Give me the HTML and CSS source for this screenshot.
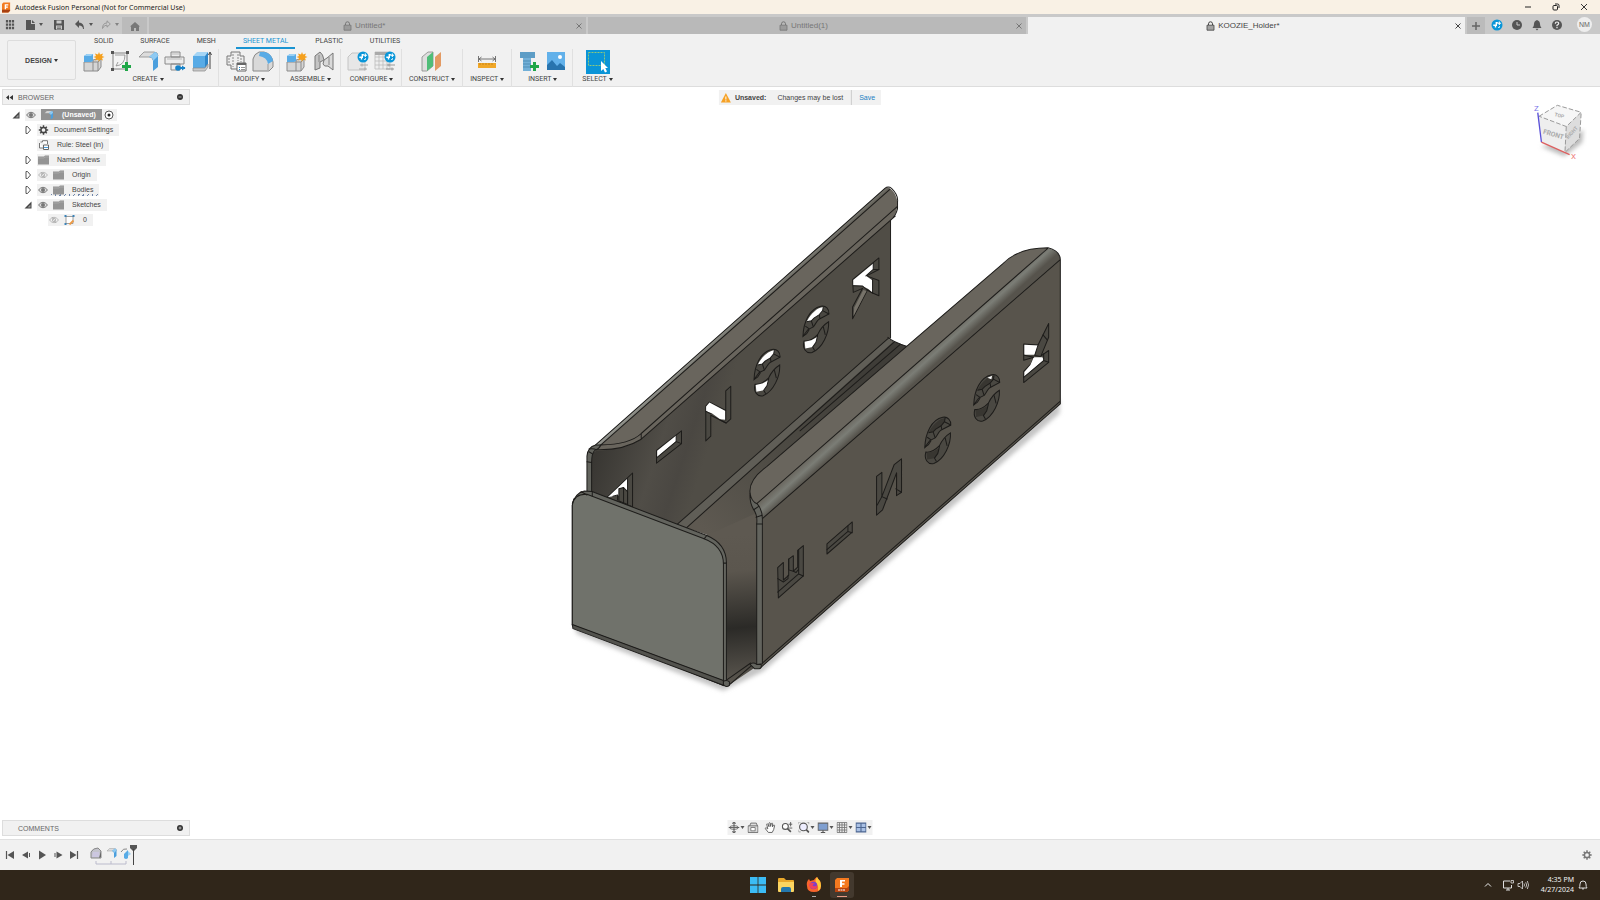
FILE: index.html
```html
<!DOCTYPE html>
<html lang="en">
<head>
    <meta charset="UTF-8">
    <meta name="viewport" content="width=device-width, initial-scale=1.0">
    <title>Autodesk Fusion Personal (Not for Commercial Use)</title>
    <link rel="stylesheet" href="styles.css">
</head>
<body>
    <!-- shared icons -->
    <svg class="defs" aria-hidden="true">
        <symbol id="lock" viewBox="0 0 9 10"><path d="M2.500 4V2.800a2 2 0 0 1 4 0V4" fill="none" stroke="currentColor"/><path d="M1 4.200h7v5H1z" fill="currentColor" fill-opacity=".45" stroke="currentColor" stroke-width=".8"/></symbol>
        <symbol id="cross" viewBox="0 0 8 8"><path d="M1.500 1.500l5 5M6.500 1.500l-5 5" stroke="currentColor" fill="none"/></symbol>
        <symbol id="eye" viewBox="0 0 10 8"><path d="M.5 4Q5-1.500 9.500 4Q5 9.500 .5 4z" fill="#ddd" stroke="currentColor"/><circle cx="5" cy="4" r="2" fill="currentColor"/></symbol>
        <symbol id="eye-off" viewBox="0 0 10 8"><path d="M.5 4Q5-1.500 9.500 4Q5 9.500 .5 4z" fill="none" stroke="#aaa" stroke-width=".8"/><circle cx="5" cy="4" r="1.700" fill="none" stroke="#aaa" stroke-width=".8"/><path d="M3 1l4 6" stroke="#aaa" stroke-width=".8"/></symbol>
        <symbol id="folder" viewBox="0 0 11 9"><path d="M0 1h6l1-1h4v9H0z" fill="#949494"/><path d="M0 2.500h6l1-1h4" stroke="#bbb" stroke-width=".5" fill="none"/></symbol>
        <symbol id="open" viewBox="0 0 8 8"><path d="M7.500 .5v7H.5z" fill="#444"/><path d="M6.500 3.500v3H3.500z" fill="#999"/></symbol>
        <symbol id="closed" viewBox="0 0 8 8"><path d="M2 .5h1.500L6.500 4 3.500 7.500H2z" fill="#fff" stroke="#555"/></symbol>
        <symbol id="gear" viewBox="0 0 10 10"><circle cx="5" cy="5" r="2.600" fill="none" stroke="currentColor" stroke-width="1.500"/><path d="M5 .3v2M5 7.700v2M.3 5h2M7.700 5h2M1.700 1.700l1.300 1.300M7 7l1.300 1.300M1.700 8.300L3 7M7 3l1.300-1.300" stroke="currentColor" stroke-width="1.500"/></symbol>
        <symbol id="sync" viewBox="0 0 12 12"><circle cx="6" cy="6" r="5.500" fill="#0a96d8"/><path d="M2.300 6.300h3V3.800h1.500M4.500 8.500V6.300" stroke="#fff" fill="none" stroke-width="1.400"/><path d="M8.300 2.500v3.600M6.500 4.300h3.600" stroke="#fff" stroke-width="1.100"/><path d="M7 8.500h1.500V7" stroke="#bfe4f7" fill="none"/></symbol>
        <symbol id="component" viewBox="0 0 22 22"><path d="M1 12h9v-2l8-2v9l-3 4H1z" fill="#d5d5d5" stroke="#8b8b8b"/><path d="M10 12v9M10 12h5l3-3M15 12v9" stroke="#8b8b8b" fill="none"/><path d="M1 6l3-2h6v7l-2 1H1z" fill="#58abe6"/><path d="M1 6l3-2h6L8 6z" fill="#9ad0f4"/><path d="M16 2l1 2.500L20 3.500 19 6l2.500 1L19 8l1 2.500-3-1L16 12l-1-2.500-3 1L13 8l-2.500-1L13 6l-1-2.500 3 1z" fill="#f5a01d"/></symbol>
        <symbol id="bend" viewBox="0 0 22 22"><path d="M2 7l5-5h10q4 0 4 4l-5 4q0-3-4-3z" fill="#dcdcdc" stroke="#8b8b8b" stroke-width=".8"/><path d="M12 7q4 0 4 4v10l5-4V6q0-3-3-4z" fill="#4b9fdd"/><path d="M12 7q4 0 4 4l5-5q0-3-3-4z" fill="#8fcaf2"/></symbol>
    </svg>

    <header class="titlebar">
        <svg class="app-icon" viewBox="0 0 10 11"><path d="M1.500 0H9v9l-2 2H0V1.500z" fill="#f37b20"/><path d="M0 8h9v1l-2 2H0z" fill="#a84010"/><path d="M3 2h4v1.400H4.500v1h2v1.300h-2V7.500H3z" fill="#fff"/></svg>
        <span class="app-title">Autodesk Fusion Personal (Not for Commercial Use)</span>
        <div class="window-buttons">
            <button aria-label="Minimize"><svg viewBox="0 0 8 8"><path d="M1 4h6" stroke="#222"/></svg></button>
            <button aria-label="Restore"><svg viewBox="0 0 8 8"><rect x="1" y="2.500" width="4.500" height="4.500" rx="1" fill="none" stroke="#222"/><path d="M3 1h2.500Q7 1 7 2.500V5" fill="none" stroke="#222"/></svg></button>
            <button aria-label="Close"><svg viewBox="0 0 8 8"><path d="M1 1l6 6M7 1L1 7" stroke="#222" stroke-width=".9"/></svg></button>
        </div>
    </header>

    <div class="tabbar">
        <div class="quick">
            <button aria-label="Data panel"><svg viewBox="0 0 10 10" width="10" height="10"><path d="M2 0v10M5 0v10M8 0v10" stroke="#555" stroke-width="2.200" stroke-dasharray="2.400 1"/></svg></button>
            <button class="drop" aria-label="File"><svg viewBox="0 0 9 10" width="9" height="10"><path d="M0 0h5v4h4v6H0z" fill="#555"/><path d="M6 0l3 3H6z" fill="#555"/></svg></button>
            <button aria-label="Save"><svg viewBox="0 0 10 10" width="10" height="10"><path d="M0 0h10v10H1L0 9z" fill="#555"/><path d="M2.500 .5h5v3h-5zM2 5.500h6v4H2z" fill="#c9c9c9"/><path d="M3 7h4M3 8.500h4" stroke="#555" stroke-width=".7"/></svg></button>
            <button class="drop" aria-label="Undo"><svg viewBox="0 0 10 9" width="10" height="9"><path d="M4 0v2.500q5 0 5 6.500h-1Q8 5.500 4 5.500V8L0 4z" fill="#555"/></svg></button>
            <button class="drop faded" aria-label="Redo"><svg viewBox="0 0 10 9" width="10" height="9"><path d="M6 .8V3Q1.500 3 1.500 8.500 3 5 6 5v2.200L9.300 4z" fill="none" stroke="#777"/></svg></button>
        </div>
        <button class="home" aria-label="Home"><svg viewBox="0 0 10 9" width="10" height="9"><path d="M5 0l5 4.500H9V9H6V6H4v3H1V4.500H0z" fill="#777"/></svg></button>
        <div class="doc-tab"><button class="doc-name"><svg><use href="#lock"/></svg>Untitled*</button><button class="doc-close" aria-label="Close Untitled"><svg><use href="#cross"/></svg></button></div>
        <div class="doc-tab"><button class="doc-name"><svg><use href="#lock"/></svg>Untitled(1)</button><button class="doc-close" aria-label="Close Untitled(1)"><svg><use href="#cross"/></svg></button></div>
        <div class="doc-tab active"><button class="doc-name"><svg><use href="#lock"/></svg>KOOZIE_Holder*</button><button class="doc-close" aria-label="Close KOOZIE_Holder"><svg><use href="#cross"/></svg></button></div>
        <button class="new-tab" aria-label="New tab"><svg viewBox="0 0 8 8" width="8" height="8"><path d="M4 0v8M0 4h8" stroke="#666" stroke-width="1.500"/></svg></button>
        <div class="account">
            <button aria-label="Extensions"><svg><use href="#sync"/></svg></button>
            <button aria-label="Job status"><svg viewBox="0 0 12 12"><circle cx="6" cy="6" r="5" fill="#555"/><path d="M6 3v3h3" stroke="#ccc" fill="none"/></svg></button>
            <button aria-label="Notifications"><svg viewBox="0 0 12 12"><path d="M1.500 9Q3 7.500 3 5q0-3 3-4 3 1 3 4 0 2.500 1.500 4zM4.500 9.800h3L6 11.500z" fill="#555"/></svg></button>
            <button aria-label="Help"><svg viewBox="0 0 12 12"><circle cx="6" cy="6" r="5" fill="#555"/><path d="M4.300 4.700Q4.300 3 6 3t1.700 1.600Q7.700 5.500 6 6.300v.9M6 8v1.200" stroke="#eee" fill="none" stroke-width="1.200"/></svg></button>
            <button class="avatar">NM</button>
        </div>
    </div>

    <div class="ribbon">
        <button class="workspace">DESIGN <i class="caret"></i></button>
        <nav class="ribbon-tabs">
            <button>SOLID</button>
            <button>SURFACE</button>
            <button>MESH</button>
            <button class="active">SHEET METAL</button>
            <button>PLASTIC</button>
            <button>UTILITIES</button>
        </nav>
        <div class="groups">
            <section class="group">
                <div class="tools">
                    <button aria-label="New component"><svg><use href="#component"/></svg></button>
                    <button aria-label="Create sketch"><svg viewBox="0 0 22 22"><path d="M3 3h14v16H3z" fill="#f4f4f4" stroke="#777" stroke-width=".9"/><path d="M6 16q9-1 9-11M6 16l2-4M5 5l10 0" fill="none" stroke="#888" stroke-width=".8"/><path d="M1 1h3v3H1zM16 1h3v3h-3zM1 18h3v3H1z" fill="#555"/><path d="M16.500 12v9M12 16.500h9" stroke="#1fa647" stroke-width="3"/></svg></button>
                    <button aria-label="Flange"><svg><use href="#bend"/></svg></button>
                    <button aria-label="Unfold"><svg viewBox="0 0 22 22"><path d="M7 2h9v5H7zM1 7h19v7H1zM7 14h9v6H7z" fill="#ececec" stroke="#888"/><path d="M8 4h7M3 9h15" stroke="#bbb"/><path d="M12 18h9" stroke="#1783c9" stroke-width="2"/><circle cx="14" cy="18" r="2.800" fill="#1783c9"/><path d="M18 15.500l3.500 2.500-3.500 2.500z" fill="#1783c9"/></svg></button>
                    <button aria-label="Extrude"><svg viewBox="0 0 22 22"><path d="M2 6l4-4h11l-3 4z" fill="#a5d5f5"/><path d="M2 6h12v12H2z" fill="#58abe6"/><path d="M14 6l3-4v12l-3 4z" fill="#2e86c9"/><path d="M2 18h12l3-4v3l-3 4H2z" fill="#c9c9c9" stroke="#888" stroke-width=".7"/><path d="M19 3v16M17.500 5L19 2l1.500 3" stroke="#444" fill="none"/></svg></button>
                </div>
                <button class="group-label">CREATE <i class="caret"></i></button>
            </section>
            <section class="group">
                <div class="tools">
                    <button aria-label="Sheet metal rules"><svg viewBox="0 0 22 22"><path d="M6 2h9v4h4v8h-4v5H6v-4H2V6h4z" fill="#eee" stroke="#777"/><path d="M4 8v5M8 4v13M13 4v7M16 8v4" stroke="#888" stroke-dasharray="2 1"/><path d="M12 13h9v8h-9z" fill="#fff" stroke="#666"/><path d="M12 14h9" stroke="#666" stroke-width="2"/><path d="M14 17.500h1M14 19.500h1" stroke="#1783c9"/><path d="M16 17.500h4M16 19.500h4" stroke="#777" stroke-width=".8"/></svg></button>
                    <button aria-label="Fillet"><svg viewBox="0 0 22 22"><path d="M1 20V9q1-5 6-7h5q8 2 9 10v5l-4 4H1z" fill="#d9d9d9" stroke="#888"/><path d="M8 2h5q7 2 8 9l-5 3Q15 7 7 6z" fill="#58abe6"/><path d="M16 14v6" stroke="#999"/></svg></button>
                </div>
                <button class="group-label">MODIFY <i class="caret"></i></button>
            </section>
            <section class="group">
                <div class="tools">
                    <button aria-label="New component"><svg><use href="#component"/></svg></button>
                    <button aria-label="Joint"><svg viewBox="0 0 22 22"><path d="M2 6l5-4q3 2 4 8l-4 2v6l-5 2z" fill="#c4c4c4" stroke="#777"/><path d="M20 3v17l-5-4q-4 1-5-2 0-5 4-6z" fill="#d9d9d9" stroke="#777"/><path d="M16 7v8M6 5v7" stroke="#888"/></svg></button>
                </div>
                <button class="group-label">ASSEMBLE <i class="caret"></i></button>
            </section>
            <section class="group">
                <div class="tools">
                    <button aria-label="Configure"><svg viewBox="0 0 22 22"><path d="M1 20V7l4-4h9l4 4v13z" fill="#e7e7e7" stroke="#c4c4c4"/><path d="M13 15h8M12 19h8M15 13.500v3M18 17.500v3" stroke="#aaa"/><use href="#sync" x="10" y="1" width="12" height="12"/></svg></button>
                    <button aria-label="Configuration table"><svg viewBox="0 0 22 22"><path d="M1 2h15v17H1zM1 7h15M1 11h15M1 15h15M5 5v14M9 5v14M13 5v14" fill="#eee" stroke="#bbb" stroke-width=".8"/><path d="M1 2h12v3H1z" fill="#aaa"/><path d="M13 15h8M12 19h8M15 13.500v3M18 17.500v3" stroke="#999"/><use href="#sync" x="10" y="1" width="12" height="12"/></svg></button>
                </div>
                <button class="group-label">CONFIGURE <i class="caret"></i></button>
            </section>
            <section class="group single">
                <div class="tools">
                    <button aria-label="Offset plane"><svg viewBox="0 0 22 22"><path d="M1 7l6-5h5v14l-6 5H1z" fill="#dedede" stroke="#888" stroke-width=".8"/><path d="M6 7l6-5v14l-6 5z" fill="#4fbd78"/><path d="M14 7l6-5v14l-6 5z" fill="#e39a63"/></svg></button>
                </div>
                <button class="group-label">CONSTRUCT <i class="caret"></i></button>
            </section>
            <section class="group single">
                <div class="tools">
                    <button aria-label="Measure"><svg viewBox="0 0 22 22"><path d="M2.500 6v6M19.500 6v6M3 9h16M5.500 7L3 9l2.500 2M16.500 7L19 9l-2.500 2" stroke="#666" fill="none" stroke-width=".9"/><path d="M2 13h18v5H2z" fill="#f0a728"/><path d="M4 13v2M7 13v2M10 13v2M13 13v2M16 13v2" stroke="#c98516"/></svg></button>
                </div>
                <button class="group-label">INSPECT <i class="caret"></i></button>
            </section>
            <section class="group">
                <div class="tools">
                    <button aria-label="Insert fastener"><svg viewBox="0 0 22 22"><path d="M2 2h15v6H2z" fill="#5d9dc6"/><path d="M5 8h8v13H5z" fill="#72b0d8"/><path d="M5 11h8M5 14h8M5 17h8" stroke="#4f8db5"/><path d="M16.500 12v9M12 16.500h9" stroke="#1fa647" stroke-width="3"/></svg></button>
                    <button aria-label="Canvas"><svg viewBox="0 0 22 22"><path d="M2 2h18v18H2z" fill="#62b1ea"/><path d="M2 15l5-5 5 6 3-3 5 4v3H2z" fill="#2874ae"/><circle cx="15" cy="7" r="2" fill="#fff"/></svg></button>
                </div>
                <button class="group-label">INSERT <i class="caret"></i></button>
            </section>
            <section class="group">
                <div class="tools">
                    <button class="picked" aria-label="Select"><svg viewBox="0 0 24 24"><path d="M0 0h24v24H0z" fill="#0a94d7"/><path d="M2.500 2.500h16v13h-16z" fill="none" stroke="#8fc97a" stroke-dasharray="2 1"/><path d="M15 11v10l2.300-2 1.700 3.500 2-1-1.700-3.500H22z" fill="#fff"/></svg></button>
                </div>
                <button class="group-label">SELECT <i class="caret"></i></button>
            </section>
        </div>
    </div>

    <main class="viewport">
        <svg class="scene" viewBox="0 0 1600 753" role="img" aria-label="Sheet metal holder">
            <defs>
                <filter id="soft" x="-10%" y="-10%" width="120%" height="120%"><feGaussianBlur stdDeviation="6"/></filter>
                <linearGradient id="wallIn" gradientUnits="userSpaceOnUse" x1="100" y1="860" x2="400" y2="960"><stop offset="0" stop-color="#393733"/><stop offset=".55" stop-color="#504d47"/><stop offset=".8" stop-color="#4a4742"/><stop offset="1" stop-color="#504d46"/></linearGradient>
                <linearGradient id="floor" gradientUnits="userSpaceOnUse" x1="900" y1="600" x2="450" y2="1080"><stop offset="0" stop-color="#3f3d38"/><stop offset=".6" stop-color="#504d46"/><stop offset="1" stop-color="#5e5951"/></linearGradient>
                <linearGradient id="floorFront" gradientUnits="userSpaceOnUse" x1="520" y1="1080" x2="555" y2="1500"><stop offset="0" stop-color="#5e5951"/><stop offset=".25" stop-color="#5b564e"/><stop offset=".65" stop-color="#2b2a27"/><stop offset="1" stop-color="#57534c"/></linearGradient>
                <linearGradient id="roll" gradientUnits="userSpaceOnUse" x1="1000" y1="620" x2="1032" y2="656"><stop offset="0" stop-color="#67635b"/><stop offset=".5" stop-color="#7b7d76"/><stop offset="1" stop-color="#56534c"/></linearGradient>
                <linearGradient id="rollLeft" gradientUnits="userSpaceOnUse" x1="530" y1="432" x2="548" y2="452"><stop offset="0" stop-color="#9b9d97"/><stop offset="1" stop-color="#5c5951"/></linearGradient>
                <g id="sCut">
                    <path class="cut" d="M-39 20C-38 -20 -20 -62 15 -69C30 -72 40 -60 39 -46L12 -32C4 -30 -2 -14 -8 -8L-24 0Z"/>
                    <path class="cut" d="M38 -23C40 10 20 55 -12 68C-30 72 -42 55 -36 34C-20 36 -5 25 5 15C12 0 20 -12 38 -23Z"/>
                </g>
                <path id="sHoles" d="M-28 -23C-16 -48 5 -66 22 -67L20 -56L10 -44L-6 -34L-14 -26ZM-34 36L-14 32L4 22L0 38L-10 52L-32 56Z"/>
                <path id="sEdges" class="edge" d="M-39 20L-28 12L-20 0M-32 -10L-20 -2M-28 -23L-14 -26L-6 -34L10 -44L20 -56L22 -67M-14 -26L-8 -8M10 -44L12 -32M20 -56L39 -46M4 22L0 38L-10 52L-4 62M22 -8L28 16M4 22L5 15"/>
            </defs>
            <g class="model" transform="translate(560 84) scale(.33333 .338)">
                <path class="shadow" d="M50 1372L490 1540L610 1482L1500 718L1500 675L600 1440L480 1500L40 1345Z" filter="url(#soft)"/>

                <!-- left wall -->
                <path fill="url(#wallIn)" d="M84 850L120 815L240 775L992 140V495L350 1048L84 955Z"/>
                <path class="edge" d="M992 138V495"/>
                <!-- left wall cutouts -->
                <path class="cut" d="M957 258V292L920 311L957 325V370L938 362L923 352L878 438V403L908 348L880 360L878 322Z"/>
                <path class="hole" d="M880 323L940 274V292L918 311L938 325V360L925 350L908 341L880 339Z"/>
                <path class="lit" d="M881 430L883 405L910 353L920 356Z"/>
                <path class="edge" d="M940 274V292L957 292M938 322V362M880 340L908 341Q915 350 938 362M940 292L918 311"/>
                <g transform="translate(768 470)"><use href="#sCut"/><use href="#sHoles" class="hole"/><use href="#sEdges"/></g>
                <g transform="translate(621 598)"><use href="#sCut"/><use href="#sHoles" class="hole"/><use href="#sEdges"/></g>
                <path class="cut" d="M512 638V735L498 747L452 724V786L437 800V697L448 685L497 710V652Z"/>
                <path class="hole" d="M438 698L448 686L496 711V737L480 736L455 718L438 712Z"/>
                <path class="edge" d="M437 712L452 720M480 738L498 747M497 710V738"/>
                <path class="cut" d="M289 828L364 770V808L289 866Z"/>
                <path class="hole" d="M291 829L348 784V800L291 848Z"/>
                <path class="edge" d="M348 784V802L364 808M348 802L289 850"/>
                <path class="cut" d="M140 968L217 895V995Z"/>
                <path class="hole" d="M143 966L202 911V960L190 938L176 942V962Z"/>
                <path class="cut" d="M176 942L190 938L202 950V988L176 978Z"/><path class="edge" d="M190 938V985M158 964L172 960V975M202 911V990"/>

                <!-- floor -->
                <path fill="url(#floor)" d="M350 1048L985 497L1000 505L1042 520L620 900L598 1100L600 1460L500 1460V1150L440 1078Z"/>
                <path fill="#605e57" d="M352 1046L984 497L1000 506L378 1056Z"/>
                <path class="edge" d="M350 1048L984 497M378 1058L1002 508M984 493Q998 506 1042 520M720 770L1022 513"/>
                <path fill="url(#floorFront)" d="M440 1080L598 1010V1462L508 1522L495 1500V1160Z"/>
                <path class="edge" d="M505 1525L575 1465M500 1508L572 1458"/>

                <!-- left flange -->
                <path class="steel" d="M105 813L975 52Q1003 46 1013 92Q1013 130 992 146L243 795Q190 828 108 828L86 845Z"/>
                <path fill="url(#rollLeft)" d="M80 845Q82 818 105 812L975 52Q984 44 992 54L120 814Q92 826 94 860Z"/>
                <path class="edge" d="M122 812L990 55M106 812L975 52Q985 44 995 52Q1016 72 1013 92M243 778L1012 106M243 795L1006 134M120 812Q210 810 243 778V795Q190 828 110 826M1013 90V112Q1008 134 992 146"/>
                <path class="rim" d="M80 950V845Q82 818 106 812L122 812Q116 824 104 828Q94 836 94 864V952Z"/>
                <path class="edge" d="M80 862L94 864M86 832L96 838M86 824Q100 822 108 826"/>

                <!-- right flange and wall -->
                <path class="steel" d="M570 955Q565 915 620 876L1328 276Q1375 228 1465 228L595 1002Q572 985 570 955Z"/>
                <path fill="url(#roll)" d="M590 986L1465 229Q1503 238 1502 265L607 1034Q606 1010 590 986Z"/>
                <path class="wall" d="M607 1030L1502 263V690L600 1473Z"/>
                <path class="edge" d="M570 955Q565 915 620 876L1328 276Q1375 228 1465 228Q1503 238 1502 265V682L607 1458M590 986L1465 229M607 1030L1502 263M600 1473L1502 690V682"/>
                <path class="rim" d="M570 955Q574 980 591 986Q608 1004 607 1034V1460L590 1462V1045Q593 1020 580 1002Q568 982 570 955Z"/>
                <path class="edge" d="M590 1046L607 1046M588 1026L606 1020M582 1003L596 994"/>
                <path class="rim" d="M570 1462Q578 1454 590 1462H603Q606 1472 598 1475H584Z"/>

                <!-- right wall cutouts -->
                <path class="cut" d="M1467 452V493L1444 548L1467 532V567L1392 627V594L1414 572L1422 552L1392 561V513L1435 516Z"/>
                <path class="hole" d="M1394 515L1435 517L1425 545L1394 545ZM1394 596L1412 575L1422 552L1448 552L1452 560L1394 610Z"/>
                <path class="edge" d="M1435 516L1425 547L1442 550M1450 486L1462 500M1452 542V562L1392 612M1452 562L1467 567M1394 546L1422 552"/>
                <g transform="translate(1281 673)"><use href="#sCut"/><use href="#sHoles" class="deep"/><path class="hole" d="M2 -60L16 -66L14 -56Z"/><use href="#sEdges"/></g>
                <g transform="translate(1134 799)"><use href="#sCut"/><use href="#sHoles" class="deep"/><use href="#sEdges"/></g>
                <path class="cut" d="M950 905L966 893V965L1003 870L1025 853V952L1010 962V895L968 1004L950 1020Z"/>
                <path class="edge" d="M966 965L982 972M966 965L952 990M1010 895V962M1008 942L1025 952"/>
                <path class="cut" d="M801 1105L877 1040V1070L801 1135Z"/>
                <path class="edge" d="M801 1122L864 1068V1052M864 1068L877 1072"/>
                <path class="cut" d="M653 1175L670 1160V1212L686 1198V1150L700 1140V1186L713 1174V1124L730 1110V1200L655 1265Z"/>
                <path class="edge" d="M653 1208L670 1218L684 1208V1198M700 1186L708 1190L716 1180M653 1248L716 1194V1124M716 1194L730 1200M686 1150V1182L700 1186"/>

                <!-- front plate -->
                <path class="rim" d="M36 1345V990Q42 955 72 948L95 950L440 1080Q498 1104 499 1160V1512L490 1525Z"/>
                <path class="front" d="M36 1345V990Q42 956 80 958L432 1090Q490 1112 490 1165V1511Z"/>
                <path fill="#53534e" class="outline" d="M36 1344L490 1510V1524L38 1356Z"/>
                <path class="edge" d="M36 985L42 970M62 950L80 960M96 950V963M440 1080L432 1090M490 1162H499"/>
                <path class="rim" d="M490 1512Q500 1506 508 1514V1524Q498 1532 490 1522Z"/>
            </g>
        </svg>

        <section class="browser">
            <div class="panel-head">
                <button class="collapse" aria-label="Collapse"><svg viewBox="0 0 7 5"><path d="M3 0v5L0 2.500zM7 0v5L3.500 2.500z" fill="#333"/></svg></button>
                <span>BROWSER</span>
                <button class="dot" aria-label="Panel options"><svg viewBox="0 0 6 6"><circle cx="3" cy="3" r="3" fill="#333"/><path d="M1.500 3h3" stroke="#ddd" stroke-width=".7"/></svg></button>
            </div>
            <ul class="tree">
                <li class="root"><svg class="arrow"><use href="#open"/></svg><div class="chip"><svg class="eye"><use href="#eye"/></svg><span class="selected"><svg class="node-icon"><use href="#bend"/></svg>(Unsaved)</span><svg class="target" viewBox="0 0 10 10"><circle cx="5" cy="5" r="4" fill="#fff" stroke="#444" stroke-width=".9"/><circle cx="5" cy="5" r="1.500" fill="#222"/></svg></div></li>
                <li><svg class="arrow"><use href="#closed"/></svg><div class="chip tight"><svg class="node-icon"><use href="#gear"/></svg><span>Document Settings</span></div></li>
                <li><i class="arrow"></i><div class="chip"><svg class="node-icon" viewBox="0 0 10 10"><path d="M2 2h2V.7h5V4M1 3v5h4" fill="#fff" stroke="#777"/><path d="M5 5h5v4.500H5z" fill="#fff" stroke="#666"/><path d="M5.500 7.500h4" stroke="#4b9fdd"/></svg><span>Rule: Steel (in)</span></div></li>
                <li><svg class="arrow"><use href="#closed"/></svg><div class="chip"><svg class="node-icon"><use href="#folder"/></svg><span>Named Views</span></div></li>
                <li><svg class="arrow"><use href="#closed"/></svg><div class="chip"><svg class="eye"><use href="#eye-off"/></svg><svg class="node-icon"><use href="#folder"/></svg><span>Origin</span></div></li>
                <li><svg class="arrow"><use href="#closed"/></svg><div class="chip hatched"><svg class="eye"><use href="#eye"/></svg><svg class="node-icon"><use href="#folder"/></svg><span>Bodies</span></div></li>
                <li><svg class="arrow"><use href="#open"/></svg><div class="chip"><svg class="eye"><use href="#eye"/></svg><svg class="node-icon"><use href="#folder"/></svg><span>Sketches</span></div></li>
                <li class="deep-leaf"><div class="chip"><svg class="eye"><use href="#eye-off"/></svg><svg class="node-icon" viewBox="0 0 10 10"><path d="M1.500 1.500h7v7h-7z" fill="#fff" stroke="#888" stroke-width=".8"/><path d="M0 0h2v2H0zM8 0h2v2H8zM0 8h2v2H0z" fill="#3c83b8"/><path d="M5 9.500l4-4" stroke="#ec9a45" stroke-width="1.800"/></svg><span>0</span></div></li>
            </ul>
        </section>

        <div class="notice">
            <svg viewBox="0 0 10 10"><path d="M5 0l5 9.500H0z" fill="#f6a124"/><path d="M5 3.500v3M5 7.300v1.200" stroke="#fff"/></svg>
            <strong>Unsaved:</strong>
            <span>Changes may be lost</span>
            <a href="#">Save</a>
        </div>

        <svg class="cube" viewBox="0 0 180 190" role="img" aria-label="View cube">
            <path d="M42 140L112 170L166 128L170 90L120 120Z" fill="#bbb" filter="url(#soft)"/>
            <path d="M36 49L91 16L163 37L118 80Z" fill="#f6f6f6"/>
            <path d="M36 49L118 80L114 158L43 127Z" fill="#eee"/>
            <path d="M118 80L163 37L158 116L114 158Z" fill="#ddd"/>
            <path d="M36 49L91 16L163 37L118 80ZM118 80L114 158L158 116L163 37" fill="none" stroke="#999" stroke-width="3" stroke-dasharray="14 6"/>
            <path d="M32 38L43 127" stroke="#5a50d8" stroke-width="4"/>
            <path d="M43 127L128 165" stroke="#dd6060" stroke-width="4"/>
            <text class="face" x="47" y="101" transform="rotate(16 47 101)">FRONT</text>
            <text class="face small" x="82" y="48" transform="rotate(14 82 48)">TOP</text>
            <text class="face small" x="124" y="118" transform="rotate(-48 124 118)">RIGHT</text>
            <text class="axis z" x="21" y="32">Z</text>
            <text class="axis x" x="132" y="179">X</text>
        </svg>

        <div class="panel-head comments">
            <span>COMMENTS</span>
            <button class="dot" aria-label="Open comments"><svg viewBox="0 0 6 6"><circle cx="3" cy="3" r="3" fill="#333"/><path d="M1.500 3h3M3 1.500v3" stroke="#ddd" stroke-width=".7"/></svg></button>
        </div>

        <div class="navbar">
            <button class="drop" aria-label="Orbit"><svg viewBox="0 0 10 10"><path d="M5 0v10M0 5h10M3.500 1.500L5 0l1.500 1.500M3.500 8.500L5 10l1.500-1.500" fill="none" stroke="#666"/><ellipse cx="5" cy="5" rx="4" ry="1.700" fill="none" stroke="#555" stroke-width=".7"/></svg></button>
            <button aria-label="Look at"><svg viewBox="0 0 10 10"><path d="M.5 3.500h9v6h-9zM2 3.500L3 1h5l1 2.500" fill="#ddd" stroke="#666" stroke-width=".8"/><path d="M3 5h4v3H3z" fill="#fff" stroke="#666" stroke-width=".7"/></svg></button>
            <button aria-label="Pan"><svg viewBox="0 0 10 10"><path d="M3.500 9.500L.7 6Q.5 5 2 5.500l1 .8L2 2q.8-.8 1.300.3l.8 2L4 1q.8-1 1.300 0L5.500 4 6.300 1.300q1-.7 1.100.3L7.200 4.500l1-1.700q1-.3 1 .5L8.300 7 7 9.500z" fill="#fff" stroke="#555" stroke-width=".8"/></svg></button>
            <button aria-label="Zoom"><svg viewBox="0 0 10 10"><circle cx="3.500" cy="4" r="2.700" fill="#fff" stroke="#555"/><path d="M5.500 6l3 3" stroke="#555" stroke-width="1.500"/><path d="M8.300 0v4M6.500 2h3.500M7 5.500h3" stroke="#555" stroke-width=".8"/></svg></button>
            <button class="drop" aria-label="Fit"><svg viewBox="0 0 10 10"><circle cx="4.500" cy="4.500" r="3.500" fill="#eef" stroke="#555"/><path d="M7 7l2.500 2.500" stroke="#555" stroke-width="1.600"/><path d="M0 2V0h2M7.500 0h2v2M0 7v2h2" fill="none" stroke="#888" stroke-width=".7"/></svg></button>
            <button class="drop" aria-label="Display settings"><svg viewBox="0 0 10 10"><path d="M.5 1h9v6.500h-9z" fill="#7f9fd0" stroke="#666"/><path d="M3 9.500h4M5 7.500v2" stroke="#555"/></svg></button>
            <button class="drop" aria-label="Grid"><svg viewBox="0 0 10 10"><path d="M.5.500h9v9h-9zM2.700.500v9M5 .5v9M7.300.500v9M.5 2.700h9M.5 5h9M.5 7.300h9" fill="#eee" stroke="#777" stroke-width=".8"/></svg></button>
            <button class="drop" aria-label="Viewports"><svg viewBox="0 0 10 10"><path d="M.5 1h9v8h-9zM5 1v8M.5 5h9" fill="#a9c0e4" stroke="#4e6791"/></svg></button>
        </div>
    </main>

    <footer class="timeline">
        <div class="transport">
            <button aria-label="Start"><svg viewBox="0 0 10 10"><path d="M1.500 1v8" stroke="#555" stroke-width="1.200"/><path d="M9 1v8L2.500 5z" fill="#555"/></svg></button>
            <button aria-label="Step back"><svg viewBox="0 0 10 10"><path d="M7 1.500v7L1 5z" fill="#555"/><path d="M8.500 3v4" stroke="#555"/></svg></button>
            <button aria-label="Play"><svg viewBox="0 0 10 10"><path d="M2 .5l7 4.500-7 4.500z" fill="#555"/></svg></button>
            <button aria-label="Step forward"><svg viewBox="0 0 10 10"><path d="M3.500 1.500v7L9.500 5z" fill="#555"/><path d="M2 3v4" stroke="#555"/></svg></button>
            <button aria-label="End"><svg viewBox="0 0 10 10"><path d="M8.500 1v8" stroke="#555" stroke-width="1.200"/><path d="M1 1v8l6.500-4z" fill="#555"/></svg></button>
        </div>
        <svg class="features" viewBox="0 0 52 24">
            <path d="M3 15V9q2-4 7-4l3 3v7z" fill="#c4c4cc" stroke="#888"/><path d="M5 9h6v5H4z" fill="#ccc7e0"/><path d="M11 15l2-1V8z" fill="#666"/>
            <use href="#bend" x="18" y="4" width="11" height="12"/>
            <path d="M33 9q2-4 6-3" fill="none" stroke="#888"/><path d="M36 15V11l4-4v8q-2 2-4 0z" fill="#58abe6"/><path d="M40 8l3 3-3 2z" fill="#9ad0f4"/>
            <path d="M8 18v3h30v-3M23 18v3" fill="none" stroke="#bbc"/>
            <path d="M42 2h7v3l-3 3h-1l-3-3z" fill="#555"/><path d="M45.500 6v16" stroke="#444"/>
        </svg>
        <button class="settings" aria-label="Preferences"><svg><use href="#gear"/></svg></button>
    </footer>

    <div class="taskbar">
        <div class="pinned">
            <button aria-label="Start menu"><svg viewBox="0 0 16 16"><path d="M0 0h7.600v7.600H0zM8.400 0H16v7.600H8.400zM0 8.400h7.600V16H0zM8.400 8.400H16V16H8.400z" fill="#3cbcf5"/></svg></button>
            <button aria-label="File Explorer"><svg viewBox="0 0 16 16"><path d="M0 2q0-1 1-1h5l2 2h7q1 0 1 1v10H0z" fill="#e9a82b"/><path d="M0 5h16v9q0 1-1 1H1q-1 0-1-1z" fill="#fbd561"/><path d="M3 15v-3q0-2 2-2h6q2 0 2 2v3z" fill="#2478ae"/></svg></button>
            <button class="running" aria-label="Firefox"><svg viewBox="0 0 16 16"><path d="M1 9Q0 5 3 2l1 2 4-1q1-2 3-3 1 2 3 4 1 2 1 5 0 6-7 6T1 9z" fill="#f8642c"/><path d="M11 0q1 2 3 4 1 2 1 5 0 3-3 5 1-4-1-7-3-3 0-7z" fill="#fdc83a"/><circle cx="7.500" cy="8.500" r="3.700" fill="#7b3fc9"/><path d="M3 7q3-2 6 0-3 0-2 2 3 1 4-1 0 4-4 4-4-1-4-5z" fill="#f2415a"/></svg></button>
            <button class="running current" aria-label="Fusion"><svg viewBox="0 0 16 16"><path d="M3 1h12v12l-2 2H1V3z" fill="#f4791f"/><path d="M1 11h12l2-2v4l-2 2H1z" fill="#b8440f"/><path d="M6 3h5v1.600H8v1.600h2.500v1.500H8V10H6z" fill="#fff"/><path d="M4 13h7" stroke="#fff" stroke-dasharray="2 .5"/></svg></button>
        </div>
        <div class="tray">
            <button aria-label="Show hidden icons"><svg viewBox="0 0 12 12"><path d="M3 7.500l3-3 3 3" fill="none" stroke="#eee"/></svg></button>
            <button aria-label="Network"><svg viewBox="0 0 12 12"><path d="M8 2H1.500v7h8V6M4 11h4M6 9v2" fill="none" stroke="#ddd"/><path d="M9 1.500h2.500V4H9z" fill="none" stroke="#ddd" stroke-width=".8"/></svg></button>
            <button aria-label="Volume"><svg viewBox="0 0 12 12"><path d="M1 4.500h2L5.500 2v8L3 7.500H1z" fill="none" stroke="#ddd" stroke-width=".8"/><path d="M7 4.500q1 1.500 0 3M8.700 3.300q2 2.700 0 5.400M10.300 2q2.500 4 0 8" fill="none" stroke="#ddd" stroke-width=".8"/></svg></button>
            <div class="clock"><span>4:35 PM</span><span>4/27/2024</span></div>
            <button aria-label="Notifications"><svg viewBox="0 0 12 12"><path d="M2 9q1-1 1-4 0-3 3-3t3 3q0 3 1 4zM5 9.500q1 1.500 2 0" fill="none" stroke="#ddd"/></svg></button>
        </div>
    </div>
</body>
</html>
```
FILE: styles.css
```css
* {
    box-sizing: border-box;
}
body {
    margin: 0;
    height: 100vh;
    display: flex;
    flex-direction: column;
    overflow: hidden;
    font-family: "Liberation Sans", Arial, sans-serif;
    font-size: 7px;
    color: #444;
    background-color: #fff;
}
button {
    display: flex;
    align-items: center;
    justify-content: center;
    padding: 0;
    border: none;
    background: none;
    font: inherit;
    color: inherit;
    cursor: pointer;
}
svg {
    display: block;
    flex: none;
}
.defs {
    position: absolute;
    width: 0;
    height: 0;
}
.caret {
    width: 0;
    height: 0;
    margin-left: 2px;
    border: 2px solid transparent;
    border-top: 3px solid #333;
    border-bottom: none;
}

/* title bar */
.titlebar {
    display: flex;
    align-items: center;
    height: 14px;
    padding: 0 12px 0 2px;
    background-color: #f9f1e5;
}
.app-icon {
    width: 9px;
    height: 11px;
}
.app-title {
    margin-left: 4px;
    font-family: "Noto Sans", sans-serif;
    font-size: 7px;
    color: #222;
}
.window-buttons {
    display: flex;
    gap: 20px;
    margin-left: auto;
}
.window-buttons svg {
    width: 8px;
    height: 8px;
}

/* document tabs */
.tabbar {
    display: flex;
    height: 20px;
    padding-top: 3px;
    background-color: #c9c9c9;
}
.quick {
    display: flex;
    align-items: center;
    gap: 11px;
    width: 122px;
    padding-left: 5px;
    padding-bottom: 2px;
}
.quick .drop::after,
.navbar .drop::after {
    content: "";
    border: 2px solid transparent;
    border-top: 3px solid #555;
    border-bottom: none;
}
.quick .drop::after {
    margin-left: 4px;
}
.quick .faded {
    opacity: 0.6;
    margin-left: -3px;
}
.home {
    width: 25px;
    padding-top: 2px;
    background-color: #bbb;
}
.doc-tab {
    flex: 1;
    display: flex;
    align-items: center;
    margin-left: 2px;
    padding-right: 3px;
    background-color: #b9b9b9;
    color: #777;
    font-size: 8px;
}
.doc-tab.active {
    background-color: #f1f1f1;
    color: #444;
}
.doc-name {
    flex: 1;
    gap: 3px;
    padding-left: 4px;
}
.doc-name svg {
    width: 9px;
    height: 10px;
}
.doc-close svg {
    width: 8px;
    height: 8px;
}
.new-tab {
    width: 18px;
    margin-left: 2px;
    background-color: #bbb;
}
.account {
    display: flex;
    align-items: center;
    gap: 8px;
    padding: 0 8px 2px 6px;
}
.account svg {
    width: 12px;
    height: 12px;
}
.avatar {
    width: 15px;
    height: 15px;
    margin-left: 6px;
    border-radius: 50%;
    background-color: #eee;
    font-size: 7px;
    color: #666;
}

/* ribbon */
.ribbon {
    display: grid;
    grid-template-columns: 77px 1fr;
    grid-template-rows: 15px 1fr;
    height: 53px;
    border-bottom: 1px solid #ddd;
    background-color: #f1f1f1;
    font-family: Roboto, sans-serif;
}
.workspace {
    grid-row: 1 / 3;
    margin: 6px 1px 7px 7px;
    border: 1px solid #ddd;
    border-radius: 2px;
    font-family: "Liberation Sans", Arial, sans-serif;
    font-weight: bold;
}
.ribbon-tabs {
    display: flex;
    gap: 13px;
    padding-left: 10px;
}
.ribbon-tabs button {
    padding: 0 7px;
    border-bottom: 2px solid transparent;
}
.ribbon-tabs .active {
    color: #1a94d2;
    border-bottom-color: #1a94d2;
}
.groups {
    display: flex;
}
.group {
    display: flex;
    flex-direction: column;
    align-items: center;
    padding: 1px 5px 0 6px;
    border-right: 1px solid #e0e0e0;
}
.group.single {
    padding: 1px 7px 0;
}
.group:last-child {
    padding-left: 9px;
    border-right: none;
}
.tools {
    display: flex;
    gap: 5px;
}
.tools svg {
    width: 22px;
    height: 22px;
}
.tools .picked,
.tools .picked svg {
    width: 24px;
    height: 24px;
}
.group-label {
    height: 10px;
    margin-top: auto;
    margin-bottom: 3px;
    white-space: nowrap;
}

/* canvas and what floats over it */
.viewport {
    position: relative;
    flex: 1;
    min-height: 0;
    background-color: #fff;
}
.scene {
    width: 100%;
    height: 100%;
}
.model path {
    stroke-linejoin: round;
    stroke-linecap: round;
}
.edge {
    fill: none;
    stroke: #1d1c1a;
    stroke-width: 3;
}
.shadow {
    fill: #c4c4c4;
}
.steel {
    fill: #69655d;
}
.wall {
    fill: #58544c;
}
.outline {
    stroke: #1d1c1a;
    stroke-width: 3;
}
.rim {
    fill: #63645e;
    stroke: #1d1c1a;
    stroke-width: 3;
}
.front {
    fill: #70726b;
    stroke: #1d1c1a;
    stroke-width: 3;
}
.cut {
    fill: #4a4842;
    stroke: #1d1c1a;
    stroke-width: 3;
}
.hole {
    fill: #fff;
}
.deep {
    fill: #383631;
}
.lit {
    fill: #77736a;
}
.browser {
    position: absolute;
    top: 2px;
    left: 2px;
    width: 188px;
}
.panel-head {
    display: flex;
    align-items: center;
    width: 188px;
    height: 16px;
    padding: 0 6px 0 15px;
    border: 1px solid #ddd;
    background-color: #f1f1f1;
    color: #666;
}
.panel-head .collapse {
    width: 12px;
    margin-left: -15px;
    margin-right: 3px;
}
.panel-head .collapse svg {
    width: 7px;
    height: 5px;
}
.panel-head .dot {
    margin-left: auto;
}
.panel-head .dot svg {
    width: 6px;
    height: 6px;
}
.comments {
    position: absolute;
    left: 2px;
    bottom: 3px;
}
.tree {
    margin: 2px 0 0;
    padding: 0;
    list-style: none;
}
.tree li {
    display: flex;
    align-items: center;
    height: 15px;
    padding-left: 22px;
}
.tree .root {
    padding-left: 10px;
}
.tree .deep-leaf {
    padding-left: 46px;
}
.arrow {
    width: 8px;
    height: 8px;
    margin-right: 5px;
}
.chip {
    display: flex;
    align-items: center;
    gap: 8px;
    height: 12px;
    padding: 0 6px 0 1px;
    background-color: #f1f1f1;
}
.chip.tight {
    gap: 5px;
}
.chip .eye {
    width: 10px;
    height: 8px;
    margin-right: -3px;
    color: #777;
}
.chip .node-icon {
    width: 11px;
    height: 10px;
}
.root .chip {
    padding: 0 3px 0 1px;
}
.selected {
    display: flex;
    align-items: center;
    gap: 8px;
    height: 11px;
    padding: 0 6px 0 2px;
    background-color: #929292;
    color: #fff;
    font-weight: bold;
}
.root .target {
    width: 10px;
    height: 10px;
    margin-left: -6px;
}
.hatched {
    background-image: repeating-linear-gradient(120deg, #6f86ab 0 1px, transparent 1px 4px);
    background-size: 48px 2px;
    background-position: right bottom;
    background-repeat: no-repeat;
}
.notice {
    position: absolute;
    top: 3px;
    left: 50%;
    transform: translateX(-50%);
    display: flex;
    align-items: center;
    height: 15px;
    padding: 0 6px 0 2px;
    background-color: #f1f1f1;
    white-space: nowrap;
}
.notice svg {
    width: 10px;
    height: 10px;
    margin-right: 4px;
}
.notice span {
    margin: 0 8px 0 11px;
}
.notice a {
    display: flex;
    align-items: center;
    height: 15px;
    padding-left: 7px;
    border-left: 1px solid #ccc;
    color: #1a7fc4;
    text-decoration: none;
}
.cube {
    position: absolute;
    top: 13px;
    right: 13px;
    width: 60px;
    height: 63px;
}
.cube text {
    font-family: Roboto, sans-serif;
}
.face {
    font-size: 20px;
    font-weight: bold;
    fill: #aaa;
}
.face.small {
    font-size: 15px;
}
.axis {
    font-size: 24px;
}
.axis.z {
    fill: #7a74e8;
}
.axis.x {
    fill: #ee7777;
}
.navbar {
    position: absolute;
    left: 50%;
    bottom: 4px;
    transform: translateX(-50%);
    display: flex;
    align-items: center;
    gap: 6px;
    height: 15px;
    padding: 0 1px;
    background-color: #f1f1f1;
}
.navbar svg {
    width: 11px;
    height: 11px;
}
.navbar .drop {
    margin-right: -3px;
}
.navbar .drop:last-child {
    margin-right: 0;
}
.navbar .drop::after {
    margin-left: 1px;
}

/* timeline */
.timeline {
    display: flex;
    align-items: center;
    height: 31px;
    padding: 0 8px 0 5px;
    border-top: 1px solid #e0e0e0;
    background-color: #f1f1f1;
}
.transport {
    display: flex;
    gap: 6px;
}
.transport svg,
.settings svg {
    width: 10px;
    height: 10px;
}
.features {
    width: 52px;
    height: 24px;
    margin-left: 9px;
}
.settings {
    margin-left: auto;
    color: #777;
}

/* system taskbar */
.taskbar {
    display: grid;
    grid-template-columns: 1fr auto 1fr;
    align-items: center;
    height: 30px;
    background-color: #30261a;
    color: #f2f2f2;
}
.pinned {
    grid-column: 2;
    display: flex;
    gap: 4px;
}
.pinned button {
    position: relative;
    width: 24px;
    height: 26px;
    border-radius: 3px;
}
.pinned svg {
    width: 16px;
    height: 16px;
}
.pinned .current {
    background-color: #43392e;
}
.pinned .running::after {
    content: "";
    position: absolute;
    bottom: 1px;
    width: 4px;
    height: 1px;
    background-color: #aaa;
}
.pinned .current::after {
    width: 10px;
    background-color: #e89a83;
}
.tray {
    display: flex;
    align-items: center;
    justify-content: flex-end;
    gap: 3px;
    padding-right: 11px;
}
.tray svg {
    width: 12px;
    height: 12px;
}
.tray button:first-child {
    margin-right: 5px;
}
.clock {
    display: flex;
    flex-direction: column;
    align-items: flex-end;
    margin-left: 9px;
    font-family: "Noto Sans", sans-serif;
    font-size: 7px;
    line-height: 10px;
}
```
